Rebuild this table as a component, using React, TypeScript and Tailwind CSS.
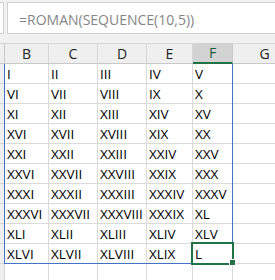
import React from "react";

const cols = ["B", "C", "D", "E", "F", "G"];

function toRoman(n: number) {
  const table: [number, string][] = [
    [50, "L"], [40, "XL"], [10, "X"], [9, "IX"], [5, "V"], [4, "IV"], [1, "I"],
  ];
  let out = "";
  for (const [v, s] of table) {
    while (n >= v) {
      out += s;
      n -= v;
    }
  }
  return out;
}

const rows = Array.from({ length: 10 }, (_, r) =>
  Array.from({ length: 5 }, (_, c) => toRoman(r * 5 + c + 1))
);

const gridCols = "grid grid-cols-[5px_44px_49px_49px_46px_40px_64px]";

export default function App() {
  return (
    <div
      className="w-[275px] h-[280px] overflow-hidden bg-[#f1f1f1] pt-[2px] text-[14px] text-black"
      style={{ fontFamily: '"Open Sans", "Liberation Sans", sans-serif' }}
    >
      {/* formula bar */}
      <div className="flex h-[32px]">
        <div className="w-[4px] shrink-0 bg-white border border-l-0 border-[#d2d2d2]" />
        <div className="ml-[3px] flex-1 bg-white border border-r-0 border-[#d2d2d2] pl-[11px] pt-[10px] leading-none text-[#858585] whitespace-nowrap">
          =ROMAN(SEQUENCE(10,5))
        </div>
      </div>

      {/* column headers */}
      <div className={`${gridCols} mt-[9px] border-t border-[#d6d6d6] w-[297px]`}>
        <div className="h-[20px] border-r border-b border-[#c8c8c8] bg-[#efefef]" />
        {cols.map((c) =>
          c === "F" ? (
            <div
              key={c}
              className="h-[20px] flex items-center justify-center border-r border-[#c8c8c8] border-b-2 border-b-[#217346] bg-[#d3d3d3] leading-none text-[#1d5b3f]"
            >
              {c}
            </div>
          ) : (
            <div
              key={c}
              className="h-[20px] flex items-center justify-center border-r border-b border-[#d6d6d6] border-b-[#c8c8c8] bg-[#efefef] leading-none text-[#222]"
            >
              {c}
            </div>
          )
        )}
      </div>

      {/* cells */}
      <div className="relative w-[297px] text-[13.5px]">
        {[...rows, ["", "", "", "", ""]].map((row, r) => (
          <div key={r} className={gridCols}>
            <div className="h-[20px] border-r border-b border-[#d6d6d6] bg-[#efefef]" />
            {[...row, ""].map((v, c) => (
              <div
                key={c}
                className="h-[20px] flex items-end pb-[2px] pl-[2px] border-r border-b border-[#dadada] bg-white leading-none whitespace-nowrap overflow-hidden"
              >
                {v}
              </div>
            ))}
          </div>
        ))}

        {/* spill range outline */}
        <div className="absolute left-[4px] top-0 w-[229px] h-[200px] border border-t-0 border-[#4472c4] pointer-events-none" />

        {/* active cell F10 */}
        <div className="absolute left-[191px] top-[178px] w-[43px] h-[23px] border-2 border-[#217346] pointer-events-none" />
        <div className="absolute left-[229px] top-[195px] w-[7px] h-[7px] bg-[#217346] border border-white" />
      </div>
    </div>
  );
}
